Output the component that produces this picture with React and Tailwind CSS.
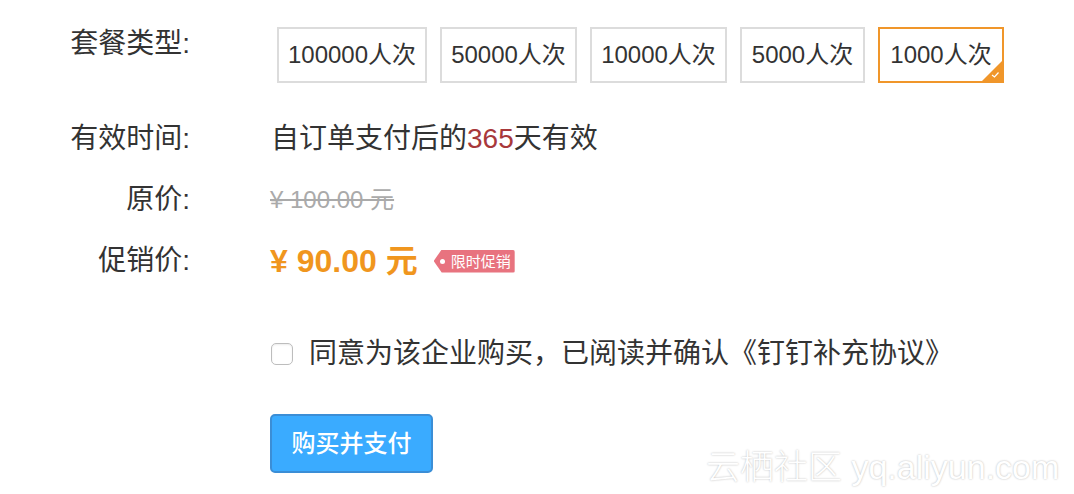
import React, { useState } from "react";

const packages = [
  { label: "100000人次", width: "w-[150px]" },
  { label: "50000人次", width: "w-[137px]" },
  { label: "10000人次", width: "w-[137px]" },
  { label: "5000人次", width: "w-[125px]" },
  { label: "1000人次", width: "w-[126px]" },
];

export default function App() {
  const [selected, setSelected] = useState(4);
  const [agreed, setAgreed] = useState(false);

  return (
    <div className="relative w-[1074px] h-[494px] overflow-hidden bg-white text-[#333] font-['Liberation_Sans','Noto_Sans_CJK_SC',sans-serif]">
      {/* 套餐类型 */}
      <div className="flex items-start mt-[27px]">
        <div className="w-[190px] shrink-0 text-right text-[28px] leading-[34px]">套餐类型:</div>
        <div className="ml-[87px] flex gap-[13px]">
          {packages.map((p, i) => (
            <button
              key={p.label}
              onClick={() => setSelected(i)}
              className={`relative ${p.width} h-[56px] flex items-center justify-center border-2 bg-white text-[24px] text-[#333] ${
                i === selected ? "border-[#f0962a]" : "border-[#dcdcdc]"
              }`}
            >
              {p.label}
              {i === selected && (
                <span className="absolute right-0 bottom-0 w-[20px] h-[20px] bg-[#f0962a] [clip-path:polygon(100%_0,100%_100%,0_100%)]">
                  <svg viewBox="0 0 20 20" className="absolute inset-0 w-full h-full">
                    <path d="M10 14 L12.5 16 L16.5 11.5" fill="none" stroke="#fff" strokeWidth="1.2" />
                  </svg>
                </span>
              )}
            </button>
          ))}
        </div>
      </div>

      {/* 有效时间 */}
      <div className="flex items-center mt-[36px] h-[40px]">
        <div className="w-[190px] shrink-0 text-right text-[28px]">有效时间:</div>
        <div className="ml-[81px] text-[28px]">
          自订单支付后的<span className="text-[#a8383b]">365</span>天有效
        </div>
      </div>

      {/* 原价 */}
      <div className="flex items-center mt-[21px] h-[40px]">
        <div className="w-[190px] shrink-0 text-right text-[28px]">原价:</div>
        <div className="ml-[80px] text-[24px] text-[#aaa] line-through">¥ 100.00 元</div>
      </div>

      {/* 促销价 */}
      <div className="flex items-center mt-[21px] h-[40px]">
        <div className="w-[190px] shrink-0 text-right text-[28px]">促销价:</div>
        <div className="ml-[80px] flex items-center">
          <span className="text-[32px] font-bold text-[#f0961e]">¥ 90.00 元</span>
          <span className="relative ml-[16px] h-[23px] flex items-center pl-[17px] pr-[4px] rounded-r-[2px] bg-[#e8737f] text-white text-[15px] leading-none [clip-path:polygon(8px_0,100%_0,100%_100%,8px_100%,0_50%)]">
            <span className="absolute left-[6px] top-[9px] w-[5px] h-[5px] rounded-full bg-white" />
            限时促销
          </span>
        </div>
      </div>

      {/* 协议 */}
      <div className="flex items-center mt-[53px] h-[40px] pl-[271px]">
        <button
          onClick={() => setAgreed(!agreed)}
          className={`w-[22px] h-[22px] rounded-[5px] border border-[#bdbdbd] shadow-[inset_0_1px_2px_rgba(0,0,0,0.08)] ${agreed ? "bg-[#3aaaff]" : "bg-white"}`}
        />
        <span className="ml-[16px] text-[28px]">同意为该企业购买，已阅读并确认《钉钉补充协议》</span>
      </div>

      {/* 购买按钮 */}
      <div className="mt-[40px] pl-[270px]">
        <button className="w-[163px] h-[59px] rounded-[5px] border-2 border-[#3b8ed6] bg-[#3aabff] text-white text-[24px] font-medium">
          购买并支付
        </button>
      </div>

      {/* watermark */}
      <div className="absolute left-[706px] top-[442px] text-[34px] font-light text-white [text-shadow:0_0_2px_rgba(0,0,0,0.3)] whitespace-nowrap">
        云栖社区 yq.aliyun.com
      </div>
    </div>
  );
}
